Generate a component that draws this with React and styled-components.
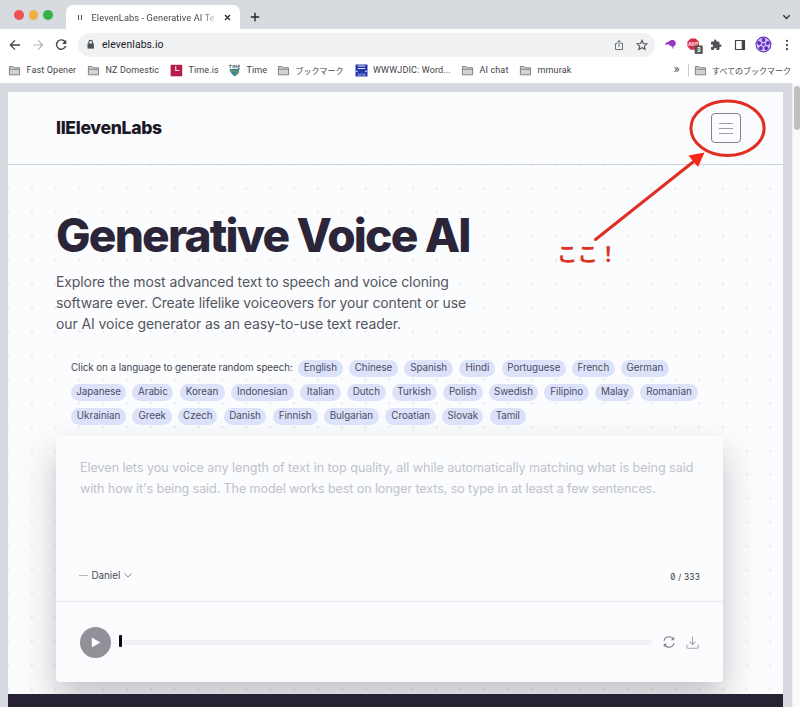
import React from "react";
import styled, { createGlobalStyle } from "styled-components";

const GlobalStyle = createGlobalStyle`
  * { box-sizing: border-box; }
  body { margin: 0; background: #d6dae0; }
`;

const Window = styled.div`
  width: 800px;
  height: 707px;
  overflow: hidden;
  position: relative;
  display: flex;
  flex-direction: column;
  background: #d6dae0;
  font-family: Inter, "Noto Sans CJK JP", sans-serif;
  color: #4a4a52;
  white-space: nowrap;
`;

/* Browser chrome */
const TabStrip = styled.div`
  height: 29px;
  flex: none;
  display: flex;
  align-items: flex-start;
  background: #d7dbe0;
  padding-right: 9px;
`;
const Lights = styled.div`
  width: 66px;
  padding: 10px 0 0 14px;
  display: flex;
  gap: 5px;
`;
const Light = styled.span`
  width: 9.5px;
  height: 9.5px;
  border-radius: 50%;
  background: ${(p) => p.$color};
`;
const Tab = styled.div`
  width: 174px;
  height: 24px;
  margin-top: 5px;
  border-radius: 7px 7px 0 0;
  background: #fff;
  display: flex;
  align-items: center;
  padding: 0 7px 0 12px;
`;
const Favicon = styled.span`
  width: 4px;
  height: 5px;
  margin-right: 9.5px;
  border: solid #55585c;
  border-width: 0 1.5px;
`;
const TabTitle = styled.span`
  width: 126px;
  font-family: Roboto, sans-serif;
  font-size: 9.2px;
  letter-spacing: 0.12px;
  color: #44474b;
  mask-image: linear-gradient(90deg, #000 86%, transparent 101%);
`;
const TabClose = styled.svg`
  width: 7px;
  height: 7px;
  margin-left: auto;
  margin-right: 2px;
`;
const NewTab = styled.svg`
  width: 10px;
  height: 10px;
  margin: 12px auto 0 10px;
`;
const TabMenu = styled.svg`
  width: 9px;
  height: 6px;
  margin: 14px 0 0;
`;
const Toolbar = styled.div`
  height: 28px;
  flex: none;
  display: flex;
  align-items: center;
  background: #fff;
  padding: 3px 6px 0 8px;
`;
const ToolIcon = styled.svg`
  width: ${(p) => p.$w || 14}px;
  height: ${(p) => p.$w || 14}px;
  flex: none;
  margin-right: ${(p) => p.$gap || 0}px;
  overflow: visible;
`;
const AddressBar = styled.div`
  width: 577px;
  height: 24px;
  border-radius: 12px;
  background: #eff1f3;
  display: flex;
  align-items: center;
  padding: 0 7px 0 7px;
  margin-right: 9px;
`;
const Url = styled.span`
  flex: 1;
  font-family: Roboto, sans-serif;
  font-size: 10.4px;
  letter-spacing: 0.1px;
  color: #202124;
`;
const BookmarkBar = styled.div`
  height: 26px;
  flex: none;
  display: flex;
  align-items: center;
  padding-left: 8px;
  background: #fff;
`;
const Bookmark = styled.div`
  width: ${(p) => p.$w}px;
  flex: none;
  display: flex;
  align-items: center;
  gap: 5.5px;
  font-family: Roboto, "Noto Sans CJK JP", sans-serif;
  font-size: ${(p) => (p.$jp ? 8 : 9)}px;
  letter-spacing: ${(p) => (p.$jp ? 0 : 0.13)}px;
  color: #3f4246;
`;
const More = styled.span`
  margin-left: auto;
  width: 14px;
  color: #444;
  font: 13px/10px Roboto, sans-serif;
  padding-bottom: 3px;
`;
const Divider = styled.span`
  width: 1px;
  height: 12px;
  background: #c9ccd0;
  margin: 0 5px 0 0;
`;

/* Page */
const Viewport = styled.div`
  flex: 1;
  min-height: 0;
  display: flex;
`;
const Page = styled.div`
  width: 775px;
  margin: 9px 9px 0 8px;
  display: flex;
  flex-direction: column;
  background: #fbfcfd;
`;
const ScrollTrack = styled.div`
  width: 8px;
  background: #fafafb;
  border-left: 1px solid #eee;
  padding: 3px 0 0 1px;
`;
const ScrollThumb = styled.div`
  height: 44px;
  border-radius: 3px;
  background: #c0c0c1;
`;
const Header = styled.header`
  height: 73px;
  flex: none;
  display: flex;
  align-items: center;
  justify-content: space-between;
  padding: 0 42px 0 48px;
  border-bottom: 1px solid #cfd2d9;
`;
const Logo = styled.div`
  font-size: 17.6px;
  font-weight: 800;
  letter-spacing: -0.34px;
  padding-bottom: 1px;
  color: #1c1827;
`;
const MenuButton = styled.button`
  width: 30px;
  height: 30px;
  padding: 0 7px;
  border: 1px solid #81828a;
  border-radius: 4px;
  background: none;
  display: flex;
  flex-direction: column;
  justify-content: center;
  gap: 4px;
`;
const MenuLine = styled.span`
  height: 1px;
  background: #a0a1a7;
`;
const Hero = styled.main`
  height: 529px;
  flex: none;
  padding: 42px 60px 0 48px;
  overflow: hidden;
  background-image: radial-gradient(circle, #e9ebef 1px, transparent 1.7px);
  background-size: 23.83px 23.83px;
  background-position: -11.9px -12px;
`;
const Title = styled.h1`
  margin: 0;
  height: 56px;
  font-size: 46px;
  line-height: 57px;
  font-weight: 800;
  letter-spacing: -1.8px;
  color: #2b2539;
`;
const Lead = styled.p`
  margin: 8px 0 0;
  font-size: 14px;
  line-height: 21px;
  color: #555660;
`;
const Line = styled.span`
  display: block;
  letter-spacing: ${(p) => p.$ls}px;
`;
const Languages = styled.div`
  margin: 26px 0 0 15px;
  display: flex;
  flex-direction: column;
  gap: 7px;
`;
const LanguageRow = styled.div`
  height: 17px;
  display: flex;
  gap: ${(p) => p.$gap}px;
`;
const Prompt = styled.span`
  width: 220.6px;
  font-size: 9.8px;
  line-height: 15px;
  letter-spacing: -0.06px;
  color: #454650;
`;
const Pill = styled.button`
  width: ${(p) => p.$w}px;
  height: 17px;
  padding: 0 0 2px;
  border: 0;
  border-radius: 9px;
  background: #dce2f9;
  font: 9.8px/15px Inter, sans-serif;
  letter-spacing: -0.02px;
  color: #4c4c62;
`;
const Card = styled.section`
  width: 667px;
  height: 246px;
  margin-top: 11px;
  border-radius: 4px;
  background: #fbfcfd;
  box-shadow: 0 17px 34px rgba(30, 28, 42, 0.25);
`;
const Editor = styled.div`
  height: 166px;
  padding: 21px 23px 0 24px;
  border-bottom: 1px solid #e8eaee;
  display: flex;
  flex-direction: column;
`;
const Placeholder = styled.div`
  height: 111px;
  font-size: 12.6px;
  line-height: 21px;
  color: #c0c2c9;
`;
const EditorFooter = styled.div`
  display: flex;
  align-items: center;
  justify-content: space-between;
  height: 14px;
`;
const Voice = styled.div`
  display: flex;
  align-items: center;
  gap: 3.5px;
  margin-left: -1px;
  font-size: 9.8px;
  color: #4a4955;
`;
const Dash = styled.span`
  width: 9px;
  height: 1px;
  background: #b7b8be;
`;
const Counter = styled.span`
  font-size: 8.3px;
  letter-spacing: 0.2px;
  font-feature-settings: "zero";
  padding-top: 3px;
  color: #3c3c44;
`;
const Player = styled.div`
  height: 80px;
  display: flex;
  align-items: center;
  padding: 0 24px 0 24px;
`;
const Play = styled.button`
  width: 31px;
  height: 31px;
  border: 0;
  padding: 0;
  border-radius: 50%;
  background: #929099;
  display: grid;
  place-items: center;
`;
const Playhead = styled.span`
  width: 3px;
  height: 12px;
  border-radius: 1px;
  background: #0c0b10;
  margin: 0 2px 3px 7.500px;
`;
const Track = styled.span`
  flex: 1;
  height: 5px;
  border-radius: 0 3px 3px 0;
  background: #f0f1f5;
  margin-right: 11.5px;
`;
const Footer = styled.footer`
  flex: 1;
  background: #282334;
`;

/* Annotation drawn over the page */
const Annotation = styled.svg`
  position: absolute;
  left: 550px;
  top: 90px;
  width: 230px;
  height: 180px;
  pointer-events: none;
`;
const Callout = styled.span`
  position: absolute;
  left: 557px;
  top: 237.5px;
  font: 700 20.5px/30px "Noto Sans CJK JP", sans-serif;
  color: #df3226;
`;

const Folder = () => (
  <ToolIcon $w={13} viewBox="0 0 13 13">
    <path d="M1.400 10.800V2.600h3.700l1.100 1.200h5.400v7z" fill="#d2d2d2" stroke="#77797b" strokeWidth=".9" />
    <path d="M1.400 5.300h10.200" stroke="#77797b" strokeWidth=".8" />
  </ToolIcon>
);
const TimeIs = () => (
  <ToolIcon $w={13} viewBox="0 0 13 13">
    <path fill="#b71c48" d="M.6.8h11.600v11.500H.6z" />
    <path d="M5.700 2.200v4.300h3.700" fill="none" stroke="#f5dce4" strokeWidth="1.200" />
  </ToolIcon>
);
const TimeGlobe = () => (
  <ToolIcon $w={13} viewBox="0 0 13 13">
    <path fill="#3676a9" d="M2 5h9.300c-.1 3.500-1.500 6-4.500 7.200C4.500 11 2.500 9 2 5z" />
    <path fill="#38a979" d="M1 6l3-.7 1.200 2L3.500 9zM7 6l4 .5-1 3-2 .5zM6 9l3 1-2 2.300z" />
    <path fill="#d65a54" d="M5 6.200h2v2H5zM9 8.500l2-.6-1 2z" />
    <path d="M.8 1.300h3M2.300 1.300v3M5 1v3.300M6.300 4.300V1.200l1 1.500 1-1.500v3.100M12 1.300h-2v3h2M10 2.700h1.800" fill="none" stroke="#48575e" strokeWidth=".8" />
  </ToolIcon>
);
const Dictionary = () => (
  <ToolIcon $w={13} viewBox="0 0 13 13">
    <path fill="#2438a9" d="M.5.5h12v12H.5z" />
    <path d="M2.800 2h7.400M2.800 4.500h7.400M.6 7.200h2.200M10 7.200h2.400" stroke="#dce2fa" strokeWidth="1.100" />
    <path d="M2.500 10h2m1 0h2m1 0h2M3 11.300h3m1 0h3" stroke="#adb7e9" strokeWidth=".8" />
  </ToolIcon>
);

const languageRows = [
  {
    gap: 6.3,
    items: [["English", 45], ["Chinese", 48.7], ["Spanish", 49], ["Hindi", 36], ["Portuguese", 64], ["French", 42.5], ["German", 48]],
  },
  {
    gap: 6.2,
    items: [["Japanese", 55.2], ["Arabic", 41], ["Korean", 45], ["Indonesian", 63], ["Italian", 41], ["Dutch", 38.4], ["Turkish", 45], ["Polish", 39.7], ["Swedish", 49.3], ["Filipino", 45], ["Malay", 38.4], ["Romanian", 58]],
  },
  {
    gap: 6.2,
    items: [["Ukrainian", 55.2], ["Greek", 39.6], ["Czech", 39.3], ["Danish", 42.8], ["Finnish", 45], ["Bulgarian", 55.2], ["Croatian", 51], ["Slovak", 41], ["Tamil", 36.5]],
  },
];

export default function App() {
  return (
    <Window>
      <GlobalStyle />
      <TabStrip>
        <Lights>
          <Light $color="#ee5552" />
          <Light $color="#f0af43" />
          <Light $color="#35b34a" />
        </Lights>
        <Tab>
          <Favicon />
          <TabTitle>ElevenLabs - Generative AI Te</TabTitle>
          <TabClose viewBox="0 0 7 7"><path d="M1 1l5 5M6 1L1 6" stroke="#292b2e" strokeWidth="1.300" /></TabClose>
        </Tab>
        <NewTab viewBox="0 0 10 10"><path d="M5 .8v8.400M.8 5h8.400" stroke="#25272a" strokeWidth="1.400" /></NewTab>
        <TabMenu viewBox="0 0 9 6"><path d="M1.300 1.200l3.200 3.200 3.200-3.200" fill="none" stroke="#303236" strokeWidth="1.400" /></TabMenu>
      </TabStrip>

      <Toolbar>
        <ToolIcon $gap={9} viewBox="0 0 14 14"><path d="M12 7H2.700M7 2.400L2.400 7 7 11.600" fill="none" stroke="#424548" strokeWidth="1.300" /></ToolIcon>
        <ToolIcon $gap={9} viewBox="0 0 14 14"><path d="M2 7h9.300M7 2.400L11.600 7 7 11.600" fill="none" stroke="#b2b4b6" strokeWidth="1.200" /></ToolIcon>
        <ToolIcon $gap={10} viewBox="0 0 14 14">
          <path d="M11.300 4.200A4.700 4.700 0 1 0 11.700 8" fill="none" stroke="#424548" strokeWidth="1.400" />
          <path d="M12.300 1.800v4.300H8z" fill="#424548" />
        </ToolIcon>
        <AddressBar>
          <ToolIcon $w={11} $gap={6} viewBox="0 0 11 11">
            <path d="M2.500 4.400h6.400v5.200H2.500z" fill="#4e5155" />
            <path d="M3.900 4.700V3.200a1.800 1.800 0 0 1 3.600 0v1.500" fill="none" stroke="#4e5155" strokeWidth="1.100" />
          </ToolIcon>
          <Url>elevenlabs.io</Url>
          <ToolIcon $w={12} $gap={11} viewBox="0 0 12 12">
            <path d="M4.300 4.500H2.500v6h7v-6H7.700M6 8V1.500M4 3.500l2-2 2 2" fill="none" stroke="#66696d" strokeWidth=".95" />
          </ToolIcon>
          <ToolIcon $w={12} viewBox="0 0 12 12">
            <path d="M6 1.300l1.400 3.200 3.500.3-2.600 2.300.8 3.400L6 8.700l-3.100 1.800.8-3.400L1.100 4.800l3.500-.3z" fill="none" stroke="#505357" strokeWidth="1.100" />
          </ToolIcon>
        </AddressBar>
        <ToolIcon $w={13} $gap={9} viewBox="0 0 13 13">
          <path d="M.5 6.800C2 4.500 3 4 4.600 3.700 6.500 1.500 10.500 1.400 11.500 4c.8 2-.1 4-2 4.500L9.200 10.500h-.9l.1-2-2-.5L4.300 6.300z" fill="#9a39bc" />
        </ToolIcon>
        <ToolIcon $w={16} $gap={8} viewBox="0 0 16 16">
          <path d="M4 1.500h5l3.300 3.300v4.600L9 12.800H4L.8 9.500V4.800z" fill="#d03146" transform="translate(.6)" />
          <text x="1.900" y="9" fontFamily="Inter" fontSize="5" fontWeight="700" fill="#ffdce1">ABP</text>
          <path d="M8.700 8.500h8v8.300h-8z" fill="#505050" />
          <text x="10.700" y="15.300" fontFamily="Liberation Sans" fontSize="7" fontWeight="700" fill="#fff">3</text>
        </ToolIcon>
        <ToolIcon $w={12} $gap={12} viewBox="0 0 24 24">
          <path d="M20.500 11H19V7a2 2 0 0 0-2-2h-4V3.500a2.500 2.500 0 0 0-5 0V5H4a2 2 0 0 0-2 2v3.800h1.500a2.700 2.700 0 0 1 0 5.400H2V20a2 2 0 0 0 2 2h3.800v-1.500a2.700 2.700 0 0 1 5.400 0V22H17a2 2 0 0 0 2-2v-4h1.500a2.500 2.500 0 0 0 0-5z" fill="#505357" />
        </ToolIcon>
        <ToolIcon $w={12} $gap={9} viewBox="0 0 12 12">
          <path d="M1.500 1.500h9v9h-9z" fill="none" stroke="#424548" strokeWidth="1.200" />
          <path d="M7.700 1.500h2.800v9H7.700z" fill="#424548" />
        </ToolIcon>
        <ToolIcon $w={17} $gap={7.5} viewBox="0 0 17 17">
          <circle cx="8.500" cy="8.500" r="7.400" fill="#dcc9ff" stroke="#6537b6" strokeWidth="1.100" />
          {[0, 72, 144, 216, 288].map((a) => (
            <circle key={a} cx="8.500" cy="4" r="2" fill="#6030b8" transform={`rotate(${a} 8.500 8.500)`} />
          ))}
          <circle cx="8.500" cy="8.500" r="1.700" fill="#7a4acb" />
        </ToolIcon>
        <ToolIcon $w={14} viewBox="0 0 14 14">
          <g fill="#484b4e"><circle cx="7" cy="2.800" r="1.150" /><circle cx="7" cy="7" r="1.150" /><circle cx="7" cy="11.200" r="1.150" /></g>
        </ToolIcon>
      </Toolbar>

      <BookmarkBar>
        <Bookmark $w={79}><Folder />Fast Opener</Bookmark>
        <Bookmark $w={83}><Folder />NZ Domestic</Bookmark>
        <Bookmark $w={58}><TimeIs />Time.is</Bookmark>
        <Bookmark $w={49}><TimeGlobe />Time</Bookmark>
        <Bookmark $w={77.5} $jp><Folder />ブックマーク</Bookmark>
        <Bookmark $w={106.5}><Dictionary />WWWJDIC: Word...</Bookmark>
        <Bookmark $w={58}><Folder />AI chat</Bookmark>
        <Bookmark $w={60}><Folder />mmurak</Bookmark>
        <More>»</More>
        <Divider />
        <Bookmark $w={106.5} $jp><Folder />すべてのブックマーク</Bookmark>
      </BookmarkBar>

      <Viewport>
        <Page>
          <Header>
            <Logo>IIElevenLabs</Logo>
            <MenuButton aria-label="Menu"><MenuLine /><MenuLine /><MenuLine /></MenuButton>
          </Header>
          <Hero>
            <Title>Generative Voice AI</Title>
            <Lead>
              <Line $ls={-0.1}>Explore the most advanced text to speech and voice cloning</Line>
              <Line $ls={-0.14}>software ever. Create lifelike voiceovers for your content or use</Line>
              <Line $ls={-0.09}>our AI voice generator as an easy-to-use text reader.</Line>
            </Lead>
            <Languages>
              {languageRows.map((row, i) => (
                <LanguageRow key={i} $gap={row.gap}>
                  {i === 0 && <Prompt>Click on a language to generate random speech:</Prompt>}
                  {row.items.map(([name, w]) => <Pill key={name} $w={w}>{name}</Pill>)}
                </LanguageRow>
              ))}
            </Languages>
            <Card>
              <Editor>
                <Placeholder>
                  <Line $ls={-0.045}>Eleven lets you voice any length of text in top quality, all while automatically matching what is being said</Line>
                  <Line $ls={-0.12}>with how it's being said. The model works best on longer texts, so type in at least a few sentences.</Line>
                </Placeholder>
                <EditorFooter>
                  <Voice>
                    <Dash />Daniel
                    <svg width="8" height="6" viewBox="0 0 8 6"><path d="M.5 1.500L4 5l3.500-3.500" fill="none" stroke="#85868e" /></svg>
                  </Voice>
                  <Counter>0 / 333</Counter>
                </EditorFooter>
              </Editor>
              <Player>
                <Play aria-label="Play"><svg width="11" height="11" viewBox="0 0 11 11"><path d="M1.800.5l8.500 5-8.500 5z" fill="#fff" /></svg></Play>
                <Playhead />
                <Track />
                <ToolIcon $w={12} $gap={11} viewBox="0 0 12 12">
                  <path d="M1 4.800A5 5 0 0 1 10.400 3.600M11 7.200A5 5 0 0 1 1.600 8.400" fill="none" stroke="#85868e" strokeWidth="1.200" />
                  <path d="M11.200.8v3.500H7.800zM.8 11.200V7.700h3.400z" fill="#85868e" />
                </ToolIcon>
                <ToolIcon $w={13} viewBox="0 0 13 13">
                  <path d="M6.500.5v8M3.600 5.700l2.900 2.900 2.900-2.900M.8 8.600v2.200c0 .9.600 1.400 1.400 1.400h8.600c.8 0 1.400-.5 1.400-1.400V8.600" fill="none" stroke="#a2a3aa" strokeWidth="1.050" />
                </ToolIcon>
              </Player>
            </Card>
          </Hero>
          <Footer />
        </Page>
        <ScrollTrack><ScrollThumb /></ScrollTrack>
      </Viewport>

      <Annotation viewBox="550 90 230 180">
        <ellipse cx="727.500" cy="128.200" rx="36.600" ry="27.200" fill="none" stroke="#e12e24" strokeWidth="3" />
        <path d="M595.500 239.500L695 160.500" stroke="#e12e24" strokeWidth="3" strokeLinecap="round" />
        <path d="M704.500 152.500L688.500 155.500L698 167z" fill="#f52717" />
      </Annotation>
      <Callout>ここ！</Callout>
    </Window>
  );
}
